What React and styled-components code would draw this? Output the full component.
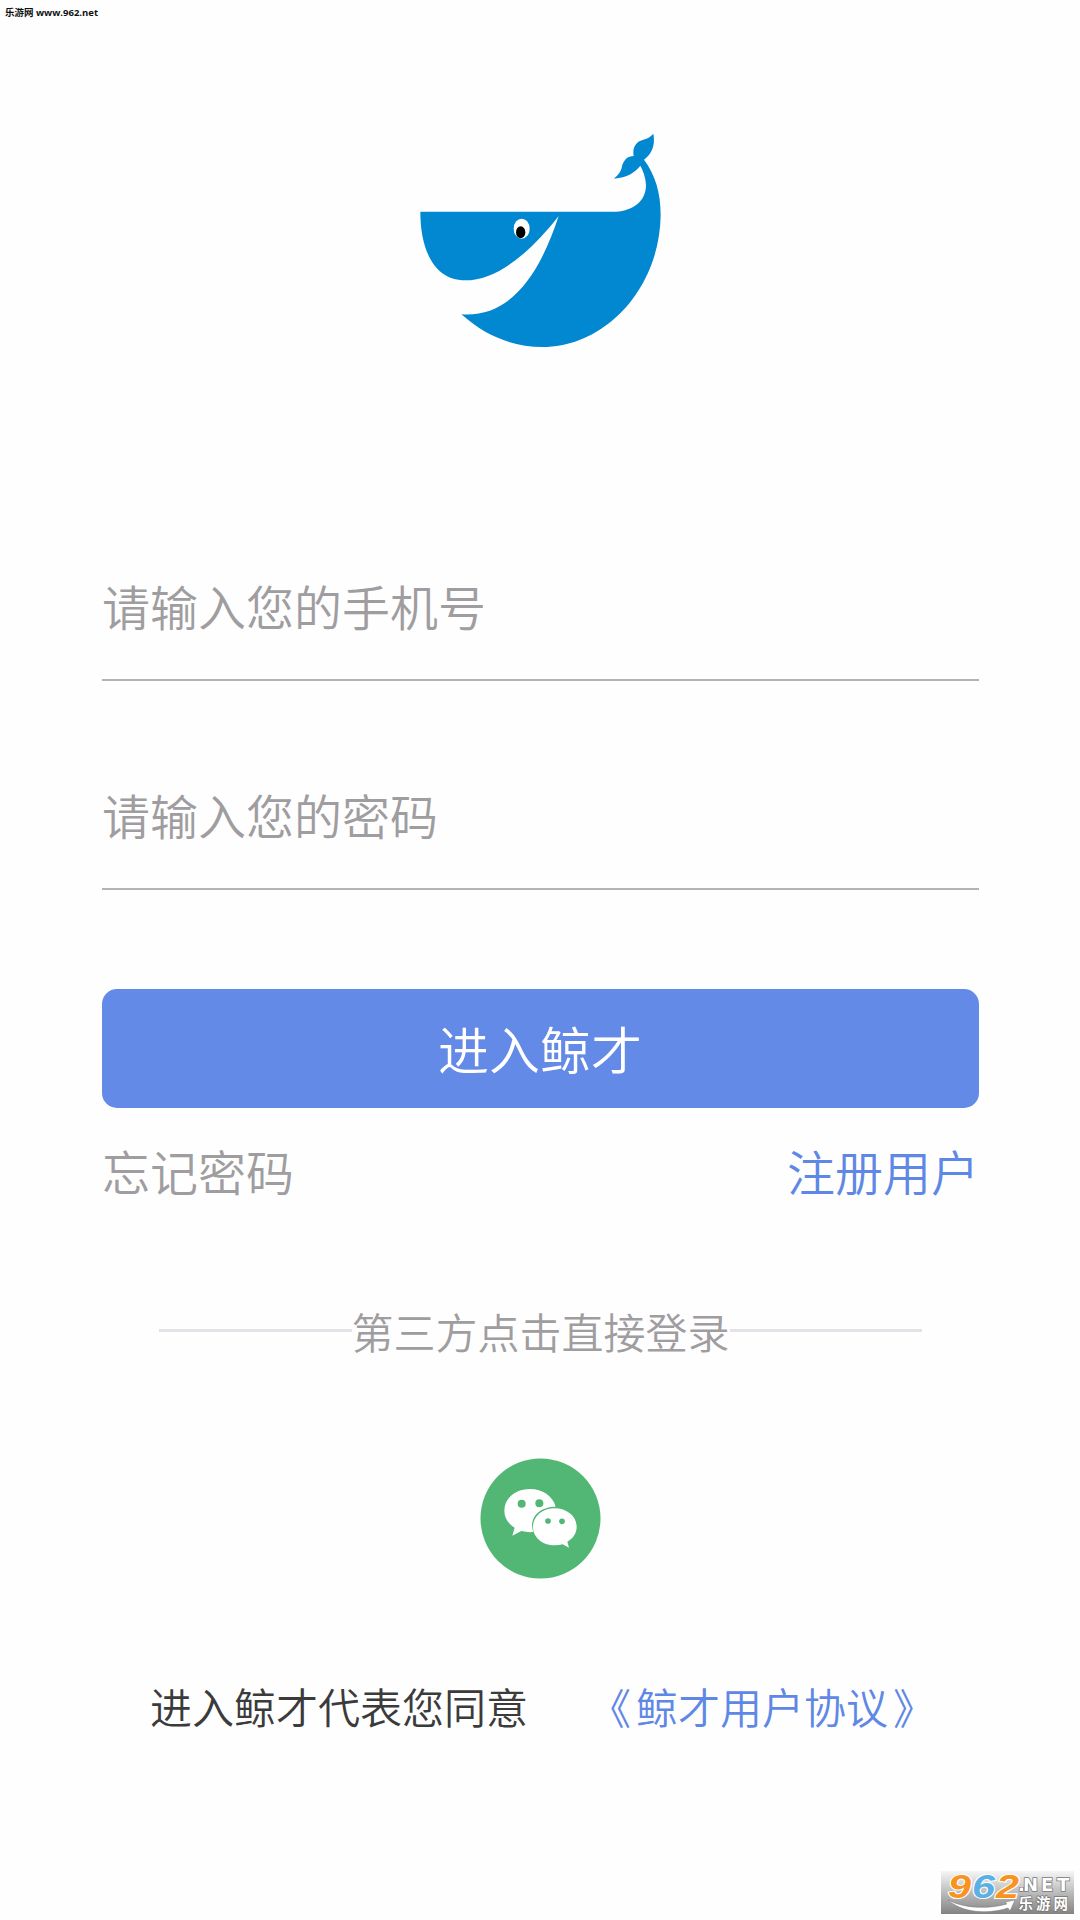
import React from 'react';
import styled, { createGlobalStyle } from 'styled-components';

const GlobalStyle = createGlobalStyle`
body{
    margin: 0;
    background: #fefefe;
    font-family: "Noto Sans CJK SC", "Noto Sans", sans-serif;
    font-weight: 350;
}
`

const LoginStyled = styled.main`
    position: relative;
    box-sizing: border-box;
    display: flex;
    flex-direction: column;
    width: 1080px;
    height: 1920px;
    padding: 120px 101px 0 102px;
    overflow: hidden;
    white-space: nowrap;
`

const Logo = styled.svg`
    width: 280px;
    height: 240px;
    margin: 0 0 112px 298px;
`

const Field = styled.div`
    padding: 103px 0 44px;
    border-bottom: 2px solid #b3b3b3;
    color: #9f9d9f;
    font-size: 48px;
    line-height: 60px;
`

const Button = styled.button`
    height: 119px;
    margin-top: 99px;
    padding: 0 1px 1px 0;
    border: 0;
    border-radius: 15px;
    background: #648ae7;
    color: #fff;
    font-family: inherit;
    font-size: 51px;
    font-weight: 350;
`

const Links = styled.div`
    display: flex;
    justify-content: space-between;
    margin-top: 32px;
    line-height: 60px;
`

const Link = styled.a`
    color: ${({ $muted }) => ($muted ? '#9f9d9f' : '#5f88e6')};
    font-size: ${({ $size }) => $size || 48}px;
`

const Divider = styled.div`
    display: flex;
    align-items: center;
    margin: 101px 57px 0 57px;
    color: #9f9d9f;
    font-size: 42px;
    line-height: 60px;
    &::before, &::after{
        content: '';
        flex: 1;
        height: 3px;
        margin-bottom: 1px;
        background: #e4e2e6;
    }
`

const Wechat = styled.svg`
    width: 121px;
    height: 121px;
    margin: 97px auto 0 378px;
`

const Agreement = styled.div`
    display: flex;
    gap: 61px;
    margin: 97px 0 0 48px;
    color: #3b3b3b;
    font-size: 42px;
    line-height: 60px;
`

const AgreementName = styled.span`
    margin: 0 5px;
`

const SiteName = styled.div`
    position: absolute;
    top: 5px;
    left: 5px;
    color: #111;
    font-family: "Open Sans", "Noto Sans CJK SC", sans-serif;
    font-size: 9.5px;
    font-weight: 700;
    line-height: 15px;
`

const Watermark = styled.svg`
    position: absolute;
    left: 941px;
    top: 1871px;
    width: 133px;
    height: 43px;
    overflow: visible;
`

const WhaleLogo = () => (
    <Logo viewBox="0 0 840 720">
        <path fill="#0287d1" d="M61 275H648C700 271 738 244 738 194C737 174 730 153 721 137C705 158 681 172 642 176C657 162 662 155 665 143C670 119 684 108 701 108C696 80 710 64 730 59C744 55 752 50 760 41C766 75 757 101 732 119C766 165 782 218 782 286C779 505 616 681 428 681C338 681 257 648 184 583C326 593 415 474 476 288C405 379 302 481 195 481C103 481 61 390 61 275Z" />
        <ellipse cx="365" cy="326" rx="24" ry="30" fill="#fff" />
        <ellipse cx="362" cy="337" rx="14" ry="18" fill="#000" />
    </Logo>
)

const WechatIcon = () => (
    <Wechat viewBox="60 55 363 363">
        <circle cx="241.500" cy="236.500" r="180" fill="#52b674" />
        <path fill="#fff" d="M210 148C166 148 133 176 133 213C133 234 144 252 164 264L157 288L184 274C195 277 208 278 220 277C205 235 238 201 287 201C279 169 247 148 210 148Z" />
        <path fill="#fff" d="M284 206C247 206 219 230 219 261C219 293 247 317 284 317C293 317 301 316 308 314L327 324L322 306C340 296 350 280 350 262C350 230 321 206 284 206Z" />
        <g fill="#52b674">
            <circle cx="185" cy="192" r="12" />
            <circle cx="238" cy="191" r="12" />
            <circle cx="264" cy="244" r="8.500" />
            <circle cx="306" cy="245" r="8.500" />
        </g>
    </Wechat>
)

const SiteWatermark = () => (
    <Watermark viewBox="0 0 133 43">
        <defs>
            <linearGradient id="shade" x1="0" y1="0" x2="0" y2="1">
                <stop offset="0" stopColor="#f6f6f6" />
                <stop offset="0.5" stopColor="#bcbcbc" />
                <stop offset="1" stopColor="#838383" />
            </linearGradient>
        </defs>
        <rect width="133" height="43" fill="url(#shade)" />
        <g fontFamily="Liberation Sans" fontWeight="700" fontStyle="italic" fontSize="33" stroke="#fff" strokeWidth="2" paintOrder="stroke">
            <text x="7" y="27" fill="#f7931e" textLength="23" lengthAdjust="spacingAndGlyphs">9</text>
            <text x="31" y="27" fill="#5bb0e5" textLength="23" lengthAdjust="spacingAndGlyphs">6</text>
            <text x="55" y="27" fill="#f7931e" textLength="23" lengthAdjust="spacingAndGlyphs">2</text>
        </g>
        <path d="M7 29C24 38 48 38 66 33L64 31L74 29L69 40L67 37C45 44 20 41 7 29Z" fill="#fff" stroke="#777" strokeWidth="0.500" />
        <g fill="#fff" stroke="#777" strokeWidth="1.500" paintOrder="stroke" fontWeight="700">
            <text x="77 82 100 116" y="20" fontFamily="DejaVu Sans" fontSize="18">.NET</text>
            <text x="77.500" y="38" fontFamily="Noto Sans CJK SC" fontSize="14.500" letterSpacing="3">乐游网</text>
        </g>
    </Watermark>
)

const App = () => {
    return (
        <>
            <GlobalStyle />
            <LoginStyled>
                <SiteName>乐游网 www.962.net</SiteName>
                <WhaleLogo />
                <Field>请输入您的手机号</Field>
                <Field>请输入您的密码</Field>
                <Button>进入鲸才</Button>
                <Links>
                    <Link $muted>忘记密码</Link>
                    <Link>注册用户</Link>
                </Links>
                <Divider>第三方点击直接登录</Divider>
                <WechatIcon />
                <Agreement>
                    <span>进入鲸才代表您同意</span>
                    <Link $size={42}>《<AgreementName>鲸才用户协议</AgreementName>》</Link>
                </Agreement>
                <SiteWatermark />
            </LoginStyled>
        </>
    )
}

export default App
